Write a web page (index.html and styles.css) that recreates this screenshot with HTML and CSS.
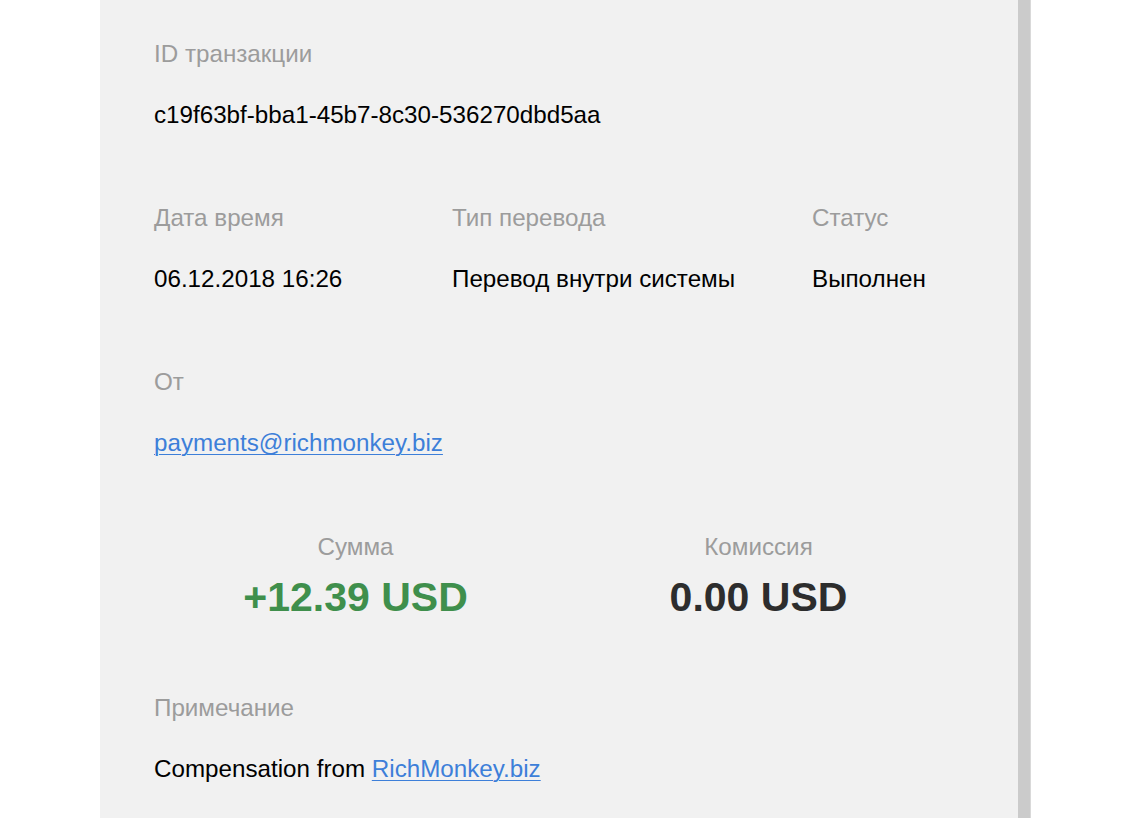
FILE: index.html
```html
<!DOCTYPE html>
<html lang="ru">
<head>
<meta charset="utf-8">
<title>Транзакция</title>
<link rel="stylesheet" href="styles.css">
</head>
<body>
<div class="page">
  <div class="panel">
    <div class="field">
      <div class="label">ID транзакции</div>
      <div class="value">c19f63bf-bba1-45b7-8c30-536270dbd5aa</div>
    </div>
    <div class="row3">
      <div class="field">
        <div class="label">Дата время</div>
        <div class="value">06.12.2018 16:26</div>
      </div>
      <div class="field">
        <div class="label">Тип перевода</div>
        <div class="value">Перевод внутри системы</div>
      </div>
      <div class="field">
        <div class="label">Статус</div>
        <div class="value">Выполнен</div>
      </div>
    </div>
    <div class="field field-from">
      <div class="label">От</div>
      <div class="value"><a class="link" href="#">payments@richmonkey.biz</a></div>
    </div>
    <div class="amounts">
      <div class="amount-col">
        <div class="label amount-label">Сумма</div>
        <div class="amount positive">+12.39 USD</div>
      </div>
      <div class="amount-col">
        <div class="label amount-label">Комиссия</div>
        <div class="amount neutral">0.00 USD</div>
      </div>
    </div>
    <div class="field">
      <div class="label">Примечание</div>
      <div class="value">Compensation from <a class="link" href="#">RichMonkey.biz</a></div>
    </div>
  </div>
  <div class="strip"></div>
</div>
</body>
</html>
```
FILE: styles.css
```css
html, body {
  margin: 0;
  padding: 0;
  background: #ffffff;
  height: 100%;
  overflow: hidden;
}
body {
  font-family: "Liberation Sans", Arial, sans-serif;
  font-size: 24.2px;
  color: #000;
}
.page {
  display: flex;
  margin-left: 100px;
  height: 818px;
}
.panel {
  width: 806px;
  background: #f1f1f1;
  padding: 40px 58px 0 54px;
  display: flex;
  flex-direction: column;
}
.strip {
  width: 12px;
  background: #cbcbcb;
  border-right: 1px solid #d9d9d9;
}
.field {
  margin-bottom: 75px;
}
.field-from {
  margin-bottom: 76px;
}
.label {
  color: #9c9c9c;
  line-height: 28px;
  margin-bottom: 33px;
}
.value {
  line-height: 28px;
  color: #000;
}
.link {
  color: #3d7fd9;
  text-decoration: underline;
  text-decoration-thickness: 1px;
  text-underline-offset: 3px;
}
.row3 {
  display: grid;
  grid-template-columns: 298px 360px 1fr;
}
.amounts {
  display: grid;
  grid-template-columns: 1fr 1fr;
  margin-bottom: 73px;
}
.amount-col {
  text-align: center;
}
.amount-label {
  margin-bottom: 12px;
}
.amount {
  font-size: 41px;
  font-weight: bold;
  line-height: 48px;
}
.positive {
  color: #3f8f4c;
}
.neutral {
  color: #2d2d2d;
}
```
